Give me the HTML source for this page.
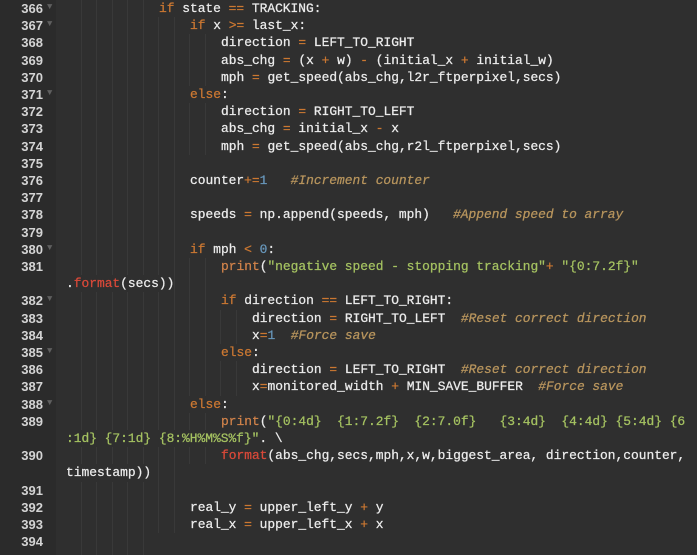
<!DOCTYPE html>
<html><head><meta charset="utf-8"><style>
html,body{margin:0;padding:0;background:#2f2f2f;width:697px;height:555px;overflow:hidden}
#g{position:absolute;left:0;top:0;width:56px;height:555px;background:#2b2b2b}
.r{position:absolute;left:0;width:697px;height:17.2px;font:12.9px/17.2px "Liberation Mono","DejaVu Sans Mono",monospace;color:#ececec;white-space:pre;-webkit-text-stroke:0.25px currentColor}
.n{position:absolute;left:0;width:43px;text-align:right;color:#d4d4d4;font-weight:bold;font-family:"Liberation Sans",sans-serif;font-size:13px;-webkit-text-stroke:0}
.f{position:absolute;left:47px;top:-1px;color:#5f5f5f;font-size:9px;-webkit-text-stroke:0}
.gd{position:absolute;top:0;height:17.2px;left:65.5px;background:repeating-linear-gradient(to right,transparent 0 15px,#434343 15px 15.5px)}
.t{position:absolute;top:0}
.k{color:#cc7832}.o{color:#cc7832}.s{color:#a5c261}.c{color:#b8955d;font-style:italic}.d{color:#6897bb}.m{color:#da4939}.p{color:#d2834a}
</style></head><body><div id="g"></div>
<div class="r" style="top:0px"><span class="gd" style="width:78px"></span><span class="n">366</span><span class="f">▼</span><span class="t" style="left:159px"><span class="k">if</span> state <span class="o">==</span> TRACKING:</span></div>
<div class="r" style="top:17.2px"><span class="gd" style="width:109px"></span><span class="n">367</span><span class="f">▼</span><span class="t" style="left:190px"><span class="k">if</span> x <span class="o">&gt;=</span> last_x:</span></div>
<div class="r" style="top:34.4px"><span class="gd" style="width:140px"></span><span class="n">368</span><span class="t" style="left:221px">direction <span class="o">=</span> LEFT_TO_RIGHT</span></div>
<div class="r" style="top:51.6px"><span class="gd" style="width:140px"></span><span class="n">369</span><span class="t" style="left:221px">abs_chg <span class="o">=</span> (x <span class="o">+</span> w) <span class="o">-</span> (initial_x <span class="o">+</span> initial_w)</span></div>
<div class="r" style="top:68.8px"><span class="gd" style="width:140px"></span><span class="n">370</span><span class="t" style="left:221px">mph <span class="o">=</span> get_speed(abs_chg,l2r_ftperpixel,secs)</span></div>
<div class="r" style="top:86px"><span class="gd" style="width:109px"></span><span class="n">371</span><span class="f">▼</span><span class="t" style="left:190px"><span class="k">else</span>:</span></div>
<div class="r" style="top:103.2px"><span class="gd" style="width:140px"></span><span class="n">372</span><span class="t" style="left:221px">direction <span class="o">=</span> RIGHT_TO_LEFT</span></div>
<div class="r" style="top:120.4px"><span class="gd" style="width:140px"></span><span class="n">373</span><span class="t" style="left:221px">abs_chg <span class="o">=</span> initial_x <span class="o">-</span> x</span></div>
<div class="r" style="top:137.6px"><span class="gd" style="width:140px"></span><span class="n">374</span><span class="t" style="left:221px">mph <span class="o">=</span> get_speed(abs_chg,r2l_ftperpixel,secs)</span></div>
<div class="r" style="top:154.8px"><span class="gd" style="width:109px"></span><span class="n">375</span></div>
<div class="r" style="top:172px"><span class="gd" style="width:109px"></span><span class="n">376</span><span class="t" style="left:190px">counter<span class="o">+=</span><span class="d">1</span>   <span class="c">#Increment counter</span></span></div>
<div class="r" style="top:189.2px"><span class="gd" style="width:109px"></span><span class="n">377</span></div>
<div class="r" style="top:206.4px"><span class="gd" style="width:109px"></span><span class="n">378</span><span class="t" style="left:190px">speeds <span class="o">=</span> np.append(speeds, mph)   <span class="c">#Append speed to array</span></span></div>
<div class="r" style="top:223.6px"><span class="gd" style="width:109px"></span><span class="n">379</span></div>
<div class="r" style="top:240.8px"><span class="gd" style="width:109px"></span><span class="n">380</span><span class="f">▼</span><span class="t" style="left:190px"><span class="k">if</span> mph <span class="o">&lt;</span> <span class="d">0</span>:</span></div>
<div class="r" style="top:258px"><span class="gd" style="width:140px"></span><span class="n">381</span><span class="t" style="left:221px"><span class="p">print</span>(<span class="s">"negative speed - stopping tracking"</span><span class="o">+</span> <span class="s">"{0:7.2f}"</span></span></div>
<div class="r" style="top:275.2px"><span class="gd" style="width:140px"></span><span class="t" style="left:66px;background:#2f2f2f">.<span class="m">format</span>(secs))</span></div>
<div class="r" style="top:292.4px"><span class="gd" style="width:140px"></span><span class="n">382</span><span class="f">▼</span><span class="t" style="left:221px"><span class="k">if</span> direction <span class="o">==</span> LEFT_TO_RIGHT:</span></div>
<div class="r" style="top:309.6px"><span class="gd" style="width:171px"></span><span class="n">383</span><span class="t" style="left:252px">direction <span class="o">=</span> RIGHT_TO_LEFT  <span class="c">#Reset correct direction</span></span></div>
<div class="r" style="top:326.8px"><span class="gd" style="width:171px"></span><span class="n">384</span><span class="t" style="left:252px">x<span class="o">=</span><span class="d">1</span>  <span class="c">#Force save</span></span></div>
<div class="r" style="top:344px"><span class="gd" style="width:140px"></span><span class="n">385</span><span class="f">▼</span><span class="t" style="left:221px"><span class="k">else</span>:</span></div>
<div class="r" style="top:361.2px"><span class="gd" style="width:171px"></span><span class="n">386</span><span class="t" style="left:252px">direction <span class="o">=</span> LEFT_TO_RIGHT  <span class="c">#Reset correct direction</span></span></div>
<div class="r" style="top:378.4px"><span class="gd" style="width:171px"></span><span class="n">387</span><span class="t" style="left:252px">x<span class="o">=</span>monitored_width <span class="o">+</span> MIN_SAVE_BUFFER  <span class="c">#Force save</span></span></div>
<div class="r" style="top:395.6px"><span class="gd" style="width:109px"></span><span class="n">388</span><span class="f">▼</span><span class="t" style="left:190px"><span class="k">else</span>:</span></div>
<div class="r" style="top:412.8px"><span class="gd" style="width:140px"></span><span class="n">389</span><span class="t" style="left:221px"><span class="p">print</span>(<span class="s">"{0:4d}  {1:7.2f}  {2:7.0f}   {3:4d}  {4:4d} {5:4d} {6</span></span></div>
<div class="r" style="top:430px"><span class="gd" style="width:140px"></span><span class="t" style="left:66px;background:#2f2f2f"><span class="s">:1d} {7:1d} {8:%H%M%S%f}"</span>. \</span></div>
<div class="r" style="top:447.2px"><span class="gd" style="width:140px"></span><span class="n">390</span><span class="t" style="left:221px"><span class="m">format</span>(abs_chg,secs,mph,x,w,biggest_area, direction,counter,</span></div>
<div class="r" style="top:464.4px"><span class="gd" style="width:109px"></span><span class="t" style="left:66px;background:#2f2f2f">timestamp))</span></div>
<div class="r" style="top:481.6px"><span class="gd" style="width:109px"></span><span class="n">391</span></div>
<div class="r" style="top:498.8px"><span class="gd" style="width:109px"></span><span class="n">392</span><span class="t" style="left:190px">real_y <span class="o">=</span> upper_left_y <span class="o">+</span> y</span></div>
<div class="r" style="top:516px"><span class="gd" style="width:109px"></span><span class="n">393</span><span class="t" style="left:190px">real_x <span class="o">=</span> upper_left_x <span class="o">+</span> x</span></div>
<div class="r" style="top:533.2px;height:21.8px"><span class="gd" style="width:78px;height:21.8px"></span><span class="n">394</span></div>
</body></html>
